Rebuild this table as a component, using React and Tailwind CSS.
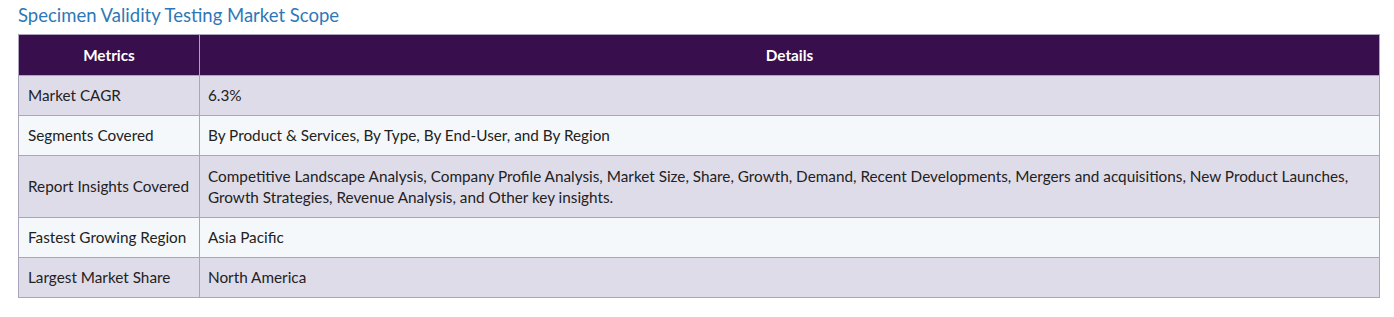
export default function App() {
  const rows = [
    ["Market CAGR", "6.3%"],
    ["Segments Covered", "By Product & Services, By Type, By End-User, and By Region"],
    ["Report Insights Covered", "Competitive Landscape Analysis, Company Profile Analysis, Market Size, Share, Growth, Demand, Recent Developments, Mergers and acquisitions, New Product Launches, Growth Strategies, Revenue Analysis, and Other key insights."],
    ["Fastest Growing Region", "Asia Pacific"],
    ["Largest Market Share", "North America"],
  ];
  return (
    <div className="w-[1394px] h-[317px] bg-white pl-[18px] pr-[14px]" style={{ fontFamily: "Lato, 'Open Sans', sans-serif" }}>
      <h2 className="text-[18.5px] leading-[30px] text-[#2e78b8] h-[34px]">Specimen Validity Testing Market Scope</h2>
      <table className="w-[1362px] border-collapse text-[15.3px] text-[#222]">
        <thead>
          <tr className="bg-[#380f4c] text-white h-[41px]">
            <th className="w-[181px] border border-[#aaa4bd] font-bold text-center">Metrics</th>
            <th className="border border-[#aaa4bd] font-bold text-center">Details</th>
          </tr>
        </thead>
        <tbody>
          {rows.map(([k, v], i) => (
            <tr key={k} className={i % 2 === 0 ? "bg-[#dfdcea]" : "bg-[#f4f8fb]"}>
              <td className={`border border-[#aaa4bd] px-[9px] whitespace-nowrap ${i === 2 ? "h-[62px]" : "h-[40px]"}`}>{k}</td>
              <td className="border border-[#aaa4bd] px-[8px] leading-[21px]">{v}</td>
            </tr>
          ))}
        </tbody>
      </table>
    </div>
  );
}
